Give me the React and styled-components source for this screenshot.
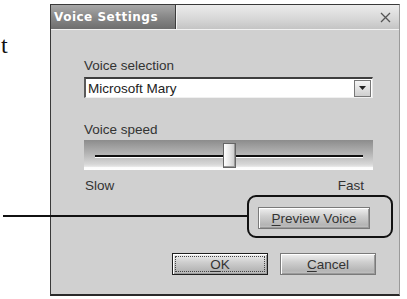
import React from "react";
import styled, { createGlobalStyle } from "styled-components";

const Global = createGlobalStyle`
  html, body { margin: 0; padding: 0; background: #fff; overflow: hidden; }
  #root { width: 407px; height: 299px; }
`;

const Page = styled.div`
  position: relative;
  width: 407px;
  height: 299px;
  display: flex;
  align-items: flex-start;
  background: #fff;
`;

const Gutter = styled.div`
  width: 50px;
  flex: none;
  padding-top: 33px;
  font-family: "Liberation Serif", serif;
  font-size: 24px;
  line-height: 24px;
  color: #111;
  padding-left: 1px;
  box-sizing: border-box;
`;

const Dialog = styled.div`
  margin-top: 4px;
  width: 350px;
  height: 292px;
  box-sizing: border-box;
  border: 1px solid #3a3a3a;
  border-right-color: #9a9a9a;
  border-bottom: 2px solid #2a2a2a;
  background: #d0d0d0;
  display: flex;
  flex-direction: column;
  font-family: "Liberation Sans", Arial, sans-serif;
`;

const TitleBar = styled.div`
  height: 24px;
  display: flex;
  flex: none;
  border-bottom: 1px solid #f2f2f2;
`;

const TitleTab = styled.div`
  width: 125px;
  display: flex;
  align-items: center;
  padding-left: 3px;
  box-sizing: border-box;
  background: linear-gradient(#a8a8a8, #888 50%, #6e6e6e);
  border-right: 1px solid #3c3c3c;
  color: #fff;
  font-family: "DejaVu Sans", Verdana, sans-serif;
  font-weight: bold;
  font-size: 12px;
  letter-spacing: 0.5px;
`;

const TitleRest = styled.div`
  flex: 1;
  display: flex;
  align-items: center;
  justify-content: flex-end;
  padding-right: 8px;
  background: linear-gradient(#ececec, #d6d6d6 60%, #c4c4c4);
  border-left: 1px solid #f4f4f4;
`;

const Body = styled.div`
  flex: 1;
  display: flex;
  flex-direction: column;
  padding: 28px 23px 0 33px;
`;

const Label = styled.div`
  font-size: 13.5px;
  line-height: 15px;
  color: #333;
  margin-top: ${(p) => p.$mt || 0}px;
`;

const Select = styled.div`
  margin-top: 4px;
  margin-right: 3px;
  height: 21px;
  box-sizing: border-box;
  background: #fff;
  border-top: 2px solid #3e3e3e;
  border-left: 2px solid #5a5a5a;
  border-right: 1px solid #e8e8e8;
  border-bottom: 1px solid #f0f0f0;
  display: flex;
  align-items: center;
  font-size: 13.5px;
  color: #222;
  padding-left: 2px;
`;

const SelectText = styled.span`
  flex: 1;
`;

const ArrowButton = styled.div`
  width: 17px;
  height: 17px;
  box-sizing: border-box;
  margin-right: 1px;
  border: 1px solid #777;
  background: linear-gradient(#f4f4f4, #cfcfcf);
  display: flex;
  align-items: center;
  justify-content: center;
`;

const Slider = styled.div`
  position: relative;
  margin-top: 3px;
  margin-right: 3px;
  height: 30px;
  box-sizing: border-box;
  background: linear-gradient(#8c8c8c, #b4b4b4 45%, #d6d6d6 80%, #e4e4e4 88%, #fbfbfb 90%, #fff);
  padding: 15px 10px 0 11px;
`;

const Track = styled.div`
  height: 2px;
  background: #111;
  border-bottom: 1px solid #fff;
`;

const Thumb = styled.div`
  position: absolute;
  top: 3px;
  width: 13px;
  height: 25px;
  box-sizing: border-box;
  border: 1px solid #666;
  background: linear-gradient(90deg, #fff, #e8e8e8 50%, #c8c8c8);
  box-shadow: inset -1px -1px 0 #999;
`;

const Scale = styled.div`
  margin-top: 8px;
  margin-right: 12px;
  margin-left: 1px;
  display: flex;
  justify-content: space-between;
  font-size: 13.5px;
  line-height: 15px;
  color: #333;
`;

const ButtonRow = styled.div`
  display: flex;
  justify-content: flex-end;
  gap: ${(p) => p.$gap || 0}px;
  margin-top: ${(p) => p.$mt || 0}px;
  margin-right: ${(p) => p.$mr || 0}px;
`;

const Button = styled.div`
  width: ${(p) => p.$w}px;
  height: 22px;
  box-sizing: border-box;
  border: 1px solid ${(p) => (p.$default ? "#1e1e1e" : "#7a7a7a")};
  background: linear-gradient(#f0f0f0, #cfcfcf 40%, #b4b4b4 85%, #c4c4c4);
  box-shadow: inset 1px 1px 0 #fff, inset -1px -1px 0 #9a9a9a;
  display: flex;
  align-items: center;
  justify-content: center;
  font-size: 13.5px;
  color: #333;
  padding: 2px;
`;

const Focus = styled.div`
  flex: 1;
  align-self: stretch;
  display: flex;
  align-items: center;
  justify-content: center;
  border: 1px dotted #444;
`;

const Key = styled.span`
  text-decoration: underline;
  text-underline-offset: 2px;
`;

const CalloutLine = styled.div`
  position: absolute;
  left: 3px;
  top: 215px;
  width: 244px;
  height: 2px;
  background: #111;
`;

const CalloutBox = styled.div`
  position: absolute;
  left: 247px;
  top: 195px;
  width: 146px;
  height: 43px;
  box-sizing: border-box;
  border: 2px solid #111;
  border-radius: 9px;
`;

export default function App() {
  const value = 0.5;
  return (
    <>
      <Global />
      <Page>
        <Gutter>t</Gutter>
        <Dialog>
          <TitleBar>
            <TitleTab>Voice Settings</TitleTab>
            <TitleRest>
              <svg width="11" height="11" viewBox="0 0 11 11">
                <path d="M1 1 L10 10 M10 1 L1 10" stroke="#555" strokeWidth="1.3" fill="none" />
              </svg>
            </TitleRest>
          </TitleBar>
          <Body>
            <Label>Voice selection</Label>
            <Select>
              <SelectText>Microsoft Mary</SelectText>
              <ArrowButton>
                <svg width="7" height="4" viewBox="0 0 7 4">
                  <path d="M0 0 H7 L3.5 4 Z" fill="#222" />
                </svg>
              </ArrowButton>
            </Select>
            <Label $mt={24}>Voice speed</Label>
            <Slider>
              <Track />
              <Thumb style={{ left: `calc(${value * 100}% - 6px)` }} />
            </Slider>
            <Scale>
              <span>Slow</span>
              <span>Fast</span>
            </Scale>
            <ButtonRow $mt={14} $mr={6}>
              <Button $w={112}>
                <span><Key>P</Key>review Voice</span>
              </Button>
            </ButtonRow>
            <ButtonRow $mt={24} $gap={12}>
              <Button $w={96} $default>
                <Focus><Key>O</Key>K</Focus>
              </Button>
              <Button $w={96}>
                <span><Key>C</Key>ancel</span>
              </Button>
            </ButtonRow>
          </Body>
        </Dialog>
        <CalloutLine />
        <CalloutBox />
      </Page>
    </>
  );
}
